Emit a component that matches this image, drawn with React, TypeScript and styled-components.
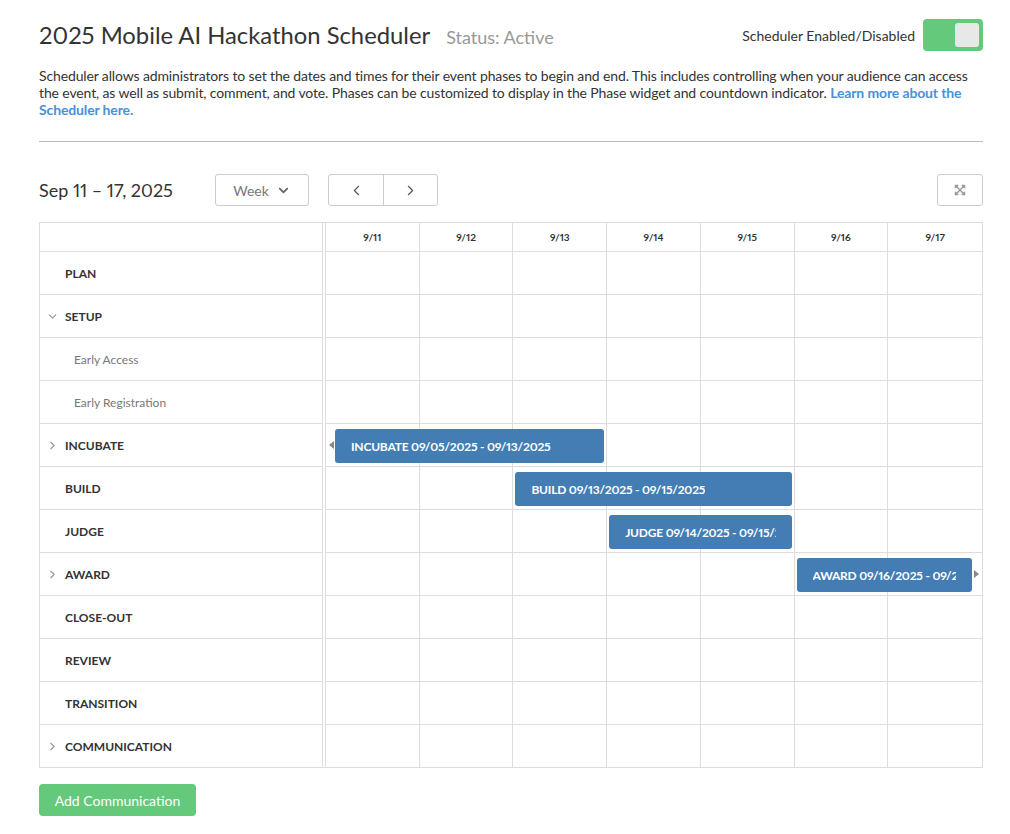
import React, { useState } from 'react'
import styled, { createGlobalStyle, css } from 'styled-components'
import { FaChevronDown, FaExpandArrowsAlt } from 'react-icons/fa'
import { ChevronLeft, ChevronRight, ChevronDown } from 'lucide-react'

const GlobalStyle = createGlobalStyle`
  body {
    margin: 0;
    background: #fff;
    font-family: Lato, "Open Sans", "Liberation Sans", sans-serif;
    font-variant-numeric: proportional-nums;
    color: #333;
  }
`

const Page = styled.div`
  width: 944px;
  padding: 19px 0 0 39px;
`

const TitleRow = styled.div`
  display: flex;
  align-items: center;
  justify-content: space-between;
  height: 32px;
`

const TitleGroup = styled.div`
  display: flex;
  align-items: baseline;
  gap: 16px;
`

const Title = styled.h1`
  margin: 0;
  font-size: 23.8px;
  font-weight: 400;
  color: #333;
`

const Status = styled.span`
  font-size: 18px;
  color: #999;
`

const ToggleGroup = styled.label`
  display: flex;
  align-items: center;
  gap: 8px;
  font-size: 14px;
  color: #333;
  cursor: pointer;
`

const Toggle = styled.button<{ on: boolean }>`
  width: 60px;
  height: 32px;
  border: none;
  border-radius: 4px;
  padding: 4px;
  display: flex;
  justify-content: ${p => (p.on ? 'flex-end' : 'flex-start')};
  background: ${p => (p.on ? '#64c97a' : '#ccc')};
  cursor: pointer;
`

const Knob = styled.span`
  width: 24px;
  height: 24px;
  border-radius: 3px;
  background: #e8e8e8;
`

const Description = styled.p`
  margin: 16px 0 0;
  font-size: 14px;
  line-height: 17px;
  letter-spacing: -0.13px;
  color: #333;
`

const Link = styled.a`
  color: #4a90d9;
  font-weight: 700;
  text-decoration: none;
`

const Divider = styled.hr`
  margin: 23px 0 0;
  border: none;
  border-top: 1px solid #bbb;
`

const Toolbar = styled.div`
  display: flex;
  align-items: center;
  height: 32px;
  margin-top: 32px;
`

const RangeLabel = styled.span`
  font-size: 18px;
  color: #333;
  width: 176px;
`

const ToolButton = styled.button`
  height: 32px;
  border: 1px solid #ccc;
  border-radius: 3px;
  background: #fff;
  font-family: inherit;
  font-size: 14px;
  color: #777;
  display: flex;
  align-items: center;
  justify-content: center;
  cursor: pointer;
`

const WeekButton = styled(ToolButton)`
  width: 94px;
  gap: 9px;
  padding-left: 4px;
`

const NavGroup = styled.div`
  display: flex;
  margin-left: 19px;
  border: 1px solid #ccc;
  border-radius: 3px;
  height: 32px;
  box-sizing: border-box;
`

const NavButton = styled.button`
  width: 54px;
  border: none;
  background: transparent;
  display: flex;
  align-items: center;
  justify-content: center;
  color: #555;
  cursor: pointer;
  & + & {
    border-left: 1px solid #ccc;
  }
`

const ExpandButton = styled(ToolButton)`
  width: 46px;
  margin-left: auto;
  color: #999;
`

const Table = styled.div`
  display: flex;
  margin-top: 16px;
  border: 1px solid #ddd;
`

const LabelColumn = styled.div`
  width: 282px;
  border-right: 1px solid #ddd;
  flex-shrink: 0;
`

const Timeline = styled.div`
  flex: 1;
  margin-left: 2px;
  border-left: 1px solid #ddd;
`

const HeaderRow = styled.div`
  height: 28px;
  border-bottom: 1px solid #ddd;
  display: grid;
  grid-template-columns: repeat(7, 1fr);
`

const DayHead = styled.div<{ last?: boolean }>`
  display: flex;
  align-items: center;
  justify-content: center;
  font-size: 10px;
  font-weight: 700;
  color: #333;
  border-right: ${p => (p.last ? 'none' : '1px solid #ddd')};
`

const LabelRow = styled.div<{ sub?: boolean }>`
  height: 42px;
  display: flex;
  align-items: center;
  border-bottom: 1px solid #ddd;
  &:last-child {
    border-bottom: none;
  }
  ${p =>
    p.sub
      ? css`
          padding-left: 34px;
          font-size: 12px;
          color: #777;
        `
      : css`
          font-size: 12px;
          font-weight: 700;
          color: #333;
        `}
`

const Caret = styled.span`
  width: 19px;
  padding-left: 6px;
  display: flex;
  align-items: center;
  color: #999;
`

const DayRow = styled.div`
  position: relative;
  height: 42px;
  display: grid;
  grid-template-columns: repeat(7, 1fr);
  border-bottom: 1px solid #ddd;
  &:last-child {
    border-bottom: none;
  }
`

const DayCell = styled.div<{ last?: boolean }>`
  border-right: ${p => (p.last ? 'none' : '1px solid #ddd')};
`

const Bar = styled.div`
  position: absolute;
  top: 5px;
  height: 34px;
  box-sizing: border-box;
  padding: 0 16px;
  border-radius: 3px;
  background: #437db4;
  display: flex;
  align-items: center;
`

const BarText = styled.span`
  display: block;
  overflow: hidden;
  white-space: nowrap;
  color: #fff;
  font-size: 12px;
  font-weight: 700;
  letter-spacing: -0.2px;
`

const Overflow = styled.span<{ side: 'left' | 'right' }>`
  position: absolute;
  top: 17px;
  width: 0;
  height: 0;
  border-top: 4px solid transparent;
  border-bottom: 4px solid transparent;
  ${p =>
    p.side === 'left'
      ? css`
          left: 3px;
          border-right: 5px solid #888;
        `
      : css`
          right: 3px;
          border-left: 5px solid #888;
        `}
`

const AddButton = styled.button`
  margin-top: 16px;
  width: 157px;
  height: 32px;
  border: none;
  border-radius: 4px;
  background: #64c97a;
  color: #fff;
  font-family: inherit;
  font-size: 14px;
  cursor: pointer;
`

type Phase = {
  name: string
  caret?: 'open' | 'closed'
  sub?: boolean
  bar?: { start: number; end: number; text: string; clipLeft?: boolean; clipRight?: boolean }
}

const days = ['9/11', '9/12', '9/13', '9/14', '9/15', '9/16', '9/17']

const phases: Phase[] = [
  { name: 'PLAN' },
  { name: 'SETUP', caret: 'open' },
  { name: 'Early Access', sub: true },
  { name: 'Early Registration', sub: true },
  {
    name: 'INCUBATE',
    caret: 'closed',
    bar: { start: 0, end: 3, text: 'INCUBATE 09/05/2025 - 09/13/2025', clipLeft: true },
  },
  { name: 'BUILD', bar: { start: 2, end: 5, text: 'BUILD 09/13/2025 - 09/15/2025' } },
  { name: 'JUDGE', bar: { start: 3, end: 5, text: 'JUDGE 09/14/2025 - 09/15/2025' } },
  {
    name: 'AWARD',
    caret: 'closed',
    bar: { start: 5, end: 7, text: 'AWARD 09/16/2025 - 09/22/2025', clipRight: true },
  },
  { name: 'CLOSE-OUT' },
  { name: 'REVIEW' },
  { name: 'TRANSITION' },
  { name: 'COMMUNICATION', caret: 'closed' },
]

// bar offsets from the day columns, wider on a side that runs past the week
const barStyle = (b: NonNullable<Phase['bar']>): React.CSSProperties => {
  const l = b.clipLeft ? 9 : 2
  const r = b.clipRight ? 10 : 3
  return {
    left: `calc(${(b.start / 7) * 100}% + ${l}px)`,
    width: `calc(${((b.end - b.start) / 7) * 100}% - ${l + r}px)`,
  }
}

export default function App() {
  const [enabled, setEnabled] = useState(true)

  return (
    <>
      <GlobalStyle />
      <Page>
        <TitleRow>
          <TitleGroup>
            <Title>2025 Mobile AI Hackathon Scheduler</Title>
            <Status>Status: Active</Status>
          </TitleGroup>
          <ToggleGroup>
            Scheduler Enabled/Disabled
            <Toggle on={enabled} onClick={() => setEnabled(!enabled)} aria-pressed={enabled}>
              <Knob />
            </Toggle>
          </ToggleGroup>
        </TitleRow>

        <Description>
          Scheduler allows administrators to set the dates and times for their event phases to begin and
          end. This includes controlling when your audience can access the event, as well as submit,
          comment, and vote. Phases can be customized to display in the Phase widget and countdown
          indicator. <Link href="#">Learn more about the Scheduler here.</Link>
        </Description>

        <Divider />

        <Toolbar>
          <RangeLabel>Sep 11 – 17, 2025</RangeLabel>
          <WeekButton>
            Week <FaChevronDown size={11} color="#666" />
          </WeekButton>
          <NavGroup>
            <NavButton>
              <ChevronLeft size={17} strokeWidth={1.6} />
            </NavButton>
            <NavButton>
              <ChevronRight size={17} strokeWidth={1.6} />
            </NavButton>
          </NavGroup>
          <ExpandButton>
            <FaExpandArrowsAlt size={12} />
          </ExpandButton>
        </Toolbar>

        <Table>
          <LabelColumn>
            <HeaderRow />
            {phases.map(p => (
              <LabelRow key={p.name} sub={p.sub}>
                {!p.sub && (
                  <Caret>
                    {p.caret === 'open' && <ChevronDown size={13} strokeWidth={2.2} />}
                    {p.caret === 'closed' && <ChevronRight size={13} strokeWidth={2.2} />}
                  </Caret>
                )}
                {p.name}
              </LabelRow>
            ))}
          </LabelColumn>
          <Timeline>
            <HeaderRow>
              {days.map((d, i) => (
                <DayHead key={d} last={i === days.length - 1}>
                  {d}
                </DayHead>
              ))}
            </HeaderRow>
            {phases.map(p => (
              <DayRow key={p.name}>
                {days.map((d, i) => (
                  <DayCell key={d} last={i === days.length - 1} />
                ))}
                {p.bar?.clipLeft && <Overflow side="left" />}
                {p.bar && (
                  <Bar style={barStyle(p.bar)}>
                    <BarText>{p.bar.text}</BarText>
                  </Bar>
                )}
                {p.bar?.clipRight && <Overflow side="right" />}
              </DayRow>
            ))}
          </Timeline>
        </Table>

        <AddButton>Add Communication</AddButton>
      </Page>
    </>
  )
}
